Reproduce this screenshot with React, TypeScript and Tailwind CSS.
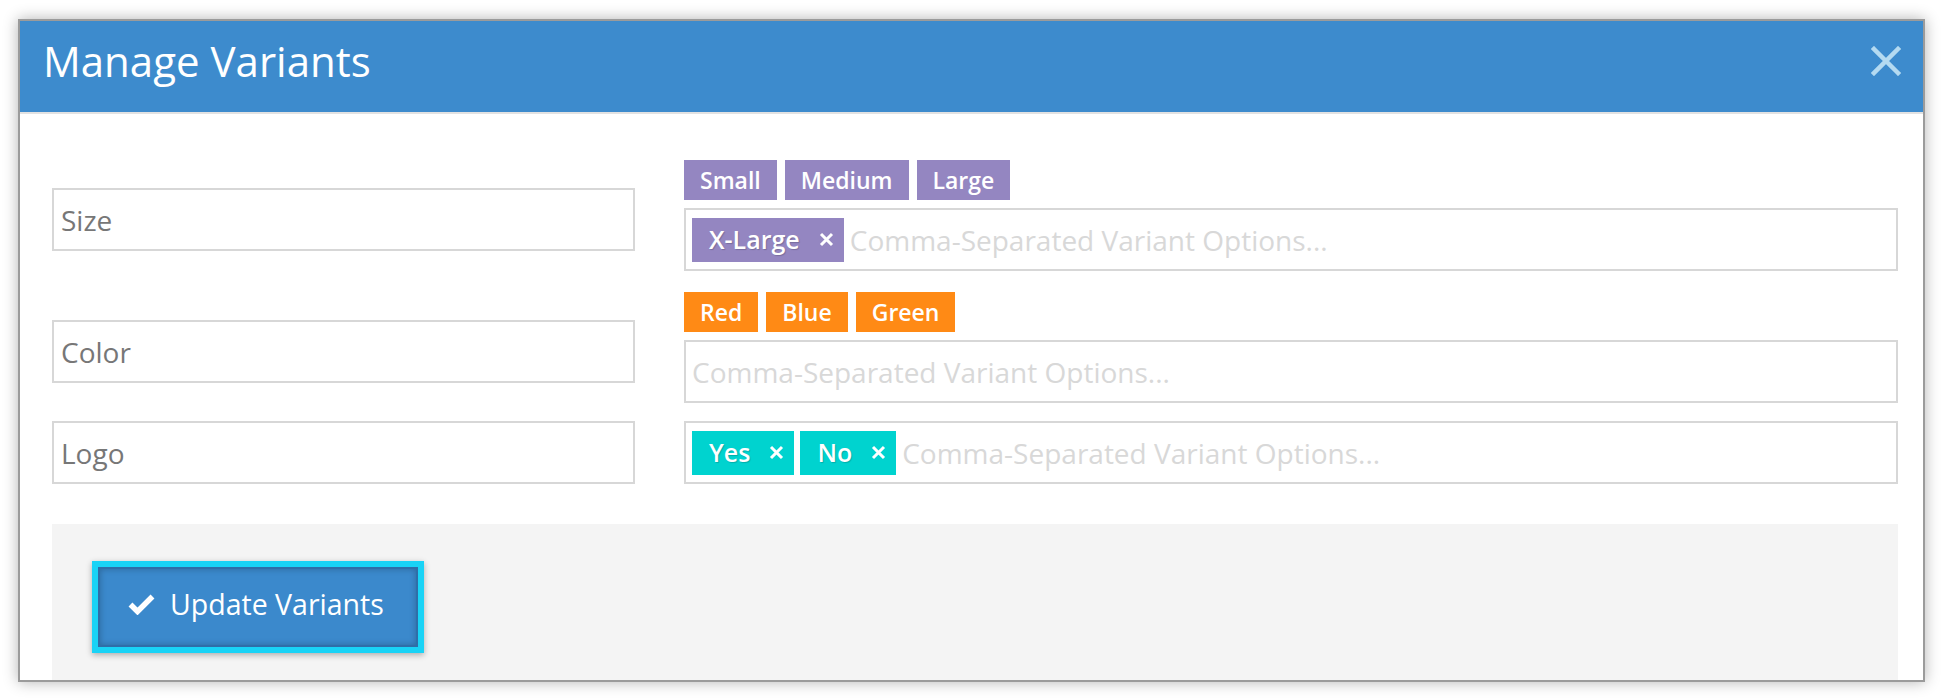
import React from 'react';

type Variant = {
  name: string;
  color: string;
  options: string[];
  chips: string[];
};

const variants: Variant[] = [
  { name: 'Size', color: 'bg-[#9486c1]', options: ['Small', 'Medium', 'Large'], chips: ['X-Large'] },
  { name: 'Color', color: 'bg-[#ff8a15]', options: ['Red', 'Blue', 'Green'], chips: [] },
  { name: 'Logo', color: 'bg-[#00d3cf]', options: [], chips: ['Yes', 'No'] },
];

const CloseIcon = () => (
  <svg width="30" height="30" viewBox="0 0 30 30" className="shrink-0">
    <path d="M3 3 L27 27 M27 3 L3 27" stroke="#b4daf1" strokeWidth="4.5" strokeLinecap="square" />
  </svg>
);

const CheckIcon = () => (
  <svg width="27" height="21" viewBox="0 0 27 21" className="shrink-0">
    <path d="M2.5 10.5 L9.5 17.5 L24.5 2.5" fill="none" stroke="#fff" strokeWidth="5.5" strokeLinejoin="miter" />
  </svg>
);

const Chip = ({ label, color }: { label: string; color: string }) => (
  <span className={`flex h-[44px] items-center gap-[19px] pl-[17px] pr-[10px] text-[25px] font-semibold text-white [text-shadow:1px_1px_1px_rgba(0,0,0,0.18)] ${color}`}>
    {label}
    <svg width="15" height="15" viewBox="0 0 15 15">
      <path d="M2 2 L13 13 M13 2 L2 13" stroke="#fff" strokeWidth="3" />
    </svg>
  </span>
);

const VariantRow = ({ v }: { v: Variant }) => {
  const hasOptions = v.options.length > 0;
  return (
    <div className="grid grid-cols-[583px_1214px] items-center gap-x-[49px]">
      <div className={hasOptions ? 'pt-2' : ''}>
        <div className="flex h-[63px] items-center border-2 border-[#d7d7d7] pl-[7px] text-[28px] text-[#777]">
          {v.name}
        </div>
      </div>
      <div className="flex flex-col gap-2">
        {hasOptions && (
          <div className="flex gap-2">
            {v.options.map((o) => (
              <span key={o} className={`flex h-[40px] items-center px-4 text-[23px] font-semibold text-white ${v.color}`}>
                {o}
              </span>
            ))}
          </div>
        )}
        <div className="flex h-[63px] items-center gap-[6px] border-2 border-[#d7d7d7] pl-[6px]">
          {v.chips.map((c) => (
            <Chip key={c} label={c} color={v.color} />
          ))}
          <span className="text-[28px] text-[#d8d8d8]">Comma-Separated Variant Options...</span>
        </div>
      </div>
    </div>
  );
};

export default function App() {
  return (
    <div className="h-[700px] w-[1944px] bg-white pl-[18px] pt-[19px] font-['Open_Sans',sans-serif]">
      <div className="flex h-[663px] w-[1907px] flex-col border-2 border-[#9b9b9b] bg-white shadow-[0_0_14px_rgba(0,0,0,0.3)]">
        <div className="flex h-[93px] shrink-0 items-start justify-between border-b-2 border-[#e2e2e2] bg-[#3d8bcd] pl-[23px] pr-[22px]">
          <h1 className="pt-[19px] text-[42px] leading-none font-normal text-white">Manage Variants</h1>
          <div className="pt-[25px]">
            <CloseIcon />
          </div>
        </div>

        <div className="flex flex-1 flex-col pl-[32px] pr-[25px]">
          <div className="flex flex-col pt-[46px]">
            <VariantRow v={variants[0]} />
            <div className="mt-[21px]">
              <VariantRow v={variants[1]} />
            </div>
            <div className="mt-[18px]">
              <VariantRow v={variants[2]} />
            </div>
          </div>

          <div className="mt-[40px] flex-1 bg-[#f4f4f4] pl-[40px] pt-[37px]">
            <div className="inline-flex border-[6px] border-[#19d3f6] shadow-[0_2px_6px_rgba(0,0,0,0.3)]">
              <button className="flex h-[80px] items-center gap-[15px] border-2 border-[#2f6ea8] bg-[#3b89cc] pb-[6px] pl-[28px] pr-[32px] text-[28.5px] text-white shadow-[inset_0_0_6px_rgba(0,0,0,0.25)]">
                <CheckIcon />
                Update Variants
              </button>
            </div>
          </div>
        </div>
      </div>
    </div>
  );
}
